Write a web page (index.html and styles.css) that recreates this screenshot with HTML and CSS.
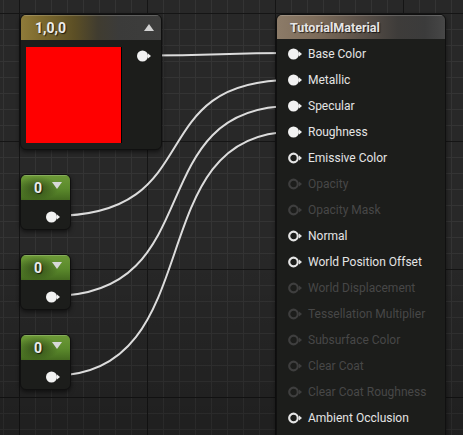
FILE: index.html
```html
<!DOCTYPE html>
<html>
<head>
<meta charset="utf-8">
<link rel="stylesheet" href="styles.css">
</head>
<body>
<div class="canvas">
  <svg class="wires" width="463" height="435" viewBox="0 0 463 435">
    <path d="M144 55.5 C220 55.5 220 53 292 53"/>
    <path d="M52 216 C212 216 138 80 292 80"/>
    <path d="M52 296 C212 296 138 106 292 106"/>
    <path d="M52 376 C212 376 138 132 292 132"/>
  </svg>

  <div class="node vec">
    <div class="head vec-head">
      <span class="title">1,0,0</span>
      <span class="tri-up"></span>
    </div>
    <div class="vec-body">
      <div class="swatch"></div>
      <svg class="pin" width="15" height="12" viewBox="0 0 15 12"><circle cx="5.5" cy="6" r="5.5"/><polygon points="11,3.5 14,6 11,8.5"/></svg>
    </div>
  </div>

  <div class="node scalar s1">
    <div class="head scalar-head"><span class="title">0</span><span class="tri-down"></span></div>
    <div class="scalar-body"><svg class="pin" width="15" height="12" viewBox="0 0 15 12"><circle cx="5.5" cy="6" r="5.5"/><polygon points="11,3.5 14,6 11,8.5"/></svg></div>
  </div>
  <div class="node scalar s2">
    <div class="head scalar-head"><span class="title">0</span><span class="tri-down"></span></div>
    <div class="scalar-body"><svg class="pin" width="15" height="12" viewBox="0 0 15 12"><circle cx="5.5" cy="6" r="5.5"/><polygon points="11,3.5 14,6 11,8.5"/></svg></div>
  </div>
  <div class="node scalar s3">
    <div class="head scalar-head"><span class="title">0</span><span class="tri-down"></span></div>
    <div class="scalar-body"><svg class="pin" width="15" height="12" viewBox="0 0 15 12"><circle cx="5.5" cy="6" r="5.5"/><polygon points="11,3.5 14,6 11,8.5"/></svg></div>
  </div>

  <div class="node mat">
    <div class="head mat-head"><span class="mat-title">TutorialMaterial</span></div>
    <ul class="inputs">
      <li class="on"><svg class="pin" width="15" height="12" viewBox="0 0 15 12"><circle cx="5.5" cy="6" r="5.5"/><polygon points="11,3.5 14,6 11,8.5"/></svg>Base Color</li>
      <li class="on"><svg class="pin" width="15" height="12" viewBox="0 0 15 12"><circle cx="5.5" cy="6" r="5.5"/><polygon points="11,3.5 14,6 11,8.5"/></svg>Metallic</li>
      <li class="on"><svg class="pin" width="15" height="12" viewBox="0 0 15 12"><circle cx="5.5" cy="6" r="5.5"/><polygon points="11,3.5 14,6 11,8.5"/></svg>Specular</li>
      <li class="on"><svg class="pin" width="15" height="12" viewBox="0 0 15 12"><circle cx="5.5" cy="6" r="5.5"/><polygon points="11,3.5 14,6 11,8.5"/></svg>Roughness</li>
      <li class="on"><svg class="pin ring" width="15" height="12" viewBox="0 0 15 12"><circle cx="5.5" cy="6" r="4.3"/><polygon points="11,3.5 14,6 11,8.5"/></svg>Emissive Color</li>
      <li class="off"><svg class="pin ring" width="15" height="12" viewBox="0 0 15 12"><circle cx="5.5" cy="6" r="4.3"/><polygon points="11,3.5 14,6 11,8.5"/></svg>Opacity</li>
      <li class="off"><svg class="pin ring" width="15" height="12" viewBox="0 0 15 12"><circle cx="5.5" cy="6" r="4.3"/><polygon points="11,3.5 14,6 11,8.5"/></svg>Opacity Mask</li>
      <li class="on"><svg class="pin ring" width="15" height="12" viewBox="0 0 15 12"><circle cx="5.5" cy="6" r="4.3"/><polygon points="11,3.5 14,6 11,8.5"/></svg>Normal</li>
      <li class="on"><svg class="pin ring" width="15" height="12" viewBox="0 0 15 12"><circle cx="5.5" cy="6" r="4.3"/><polygon points="11,3.5 14,6 11,8.5"/></svg>World Position Offset</li>
      <li class="off"><svg class="pin ring" width="15" height="12" viewBox="0 0 15 12"><circle cx="5.5" cy="6" r="4.3"/><polygon points="11,3.5 14,6 11,8.5"/></svg>World Displacement</li>
      <li class="off"><svg class="pin ring" width="15" height="12" viewBox="0 0 15 12"><circle cx="5.5" cy="6" r="4.3"/><polygon points="11,3.5 14,6 11,8.5"/></svg>Tessellation Multiplier</li>
      <li class="off"><svg class="pin ring" width="15" height="12" viewBox="0 0 15 12"><circle cx="5.5" cy="6" r="4.3"/><polygon points="11,3.5 14,6 11,8.5"/></svg>Subsurface Color</li>
      <li class="off"><svg class="pin ring" width="15" height="12" viewBox="0 0 15 12"><circle cx="5.5" cy="6" r="4.3"/><polygon points="11,3.5 14,6 11,8.5"/></svg>Clear Coat</li>
      <li class="off"><svg class="pin ring" width="15" height="12" viewBox="0 0 15 12"><circle cx="5.5" cy="6" r="4.3"/><polygon points="11,3.5 14,6 11,8.5"/></svg>Clear Coat Roughness</li>
      <li class="on"><svg class="pin ring" width="15" height="12" viewBox="0 0 15 12"><circle cx="5.5" cy="6" r="4.3"/><polygon points="11,3.5 14,6 11,8.5"/></svg>Ambient Occlusion</li>
    </ul>
  </div>
</div>
</body>
</html>
```
FILE: styles.css
```css
html, body {
  margin: 0;
  padding: 0;
  background: #262626;
}
.canvas {
  position: relative;
  width: 463px;
  height: 435px;
  overflow: hidden;
  font-family: Roboto, "Liberation Sans", sans-serif;
  background-color: #282828;
  background-image:
    linear-gradient(to bottom, rgba(0,0,0,0) 55%, rgba(0,0,0,0.22) 100%),
    linear-gradient(to bottom, #151515 1px, transparent 1px),
    linear-gradient(to right, #151515 1px, transparent 1px),
    linear-gradient(to bottom, #343434 1px, transparent 1px),
    linear-gradient(to right, #343434 1px, transparent 1px);
  background-size: 100% 100%, 128px 128px, 128px 128px, 16px 16px, 16px 16px;
  background-position: 0 0, 0 13px, 19px 0, 0 13px, 3px 0;
}
.wires {
  position: absolute;
  left: 0;
  top: 0;
}
.wires path {
  fill: none;
  stroke: #dcdcdc;
  stroke-width: 2;
}
.node {
  position: absolute;
  box-sizing: border-box;
  background: #1c1d1b;
  border-radius: 6px;
  border: 1px solid #101010;
  box-shadow: 0 2px 4px rgba(0,0,0,0.55);
  overflow: hidden;
}
.head {
  display: flex;
  align-items: center;
  box-sizing: border-box;
  box-shadow: inset 0 1px 0 rgba(255,255,255,0.18);
}
.title {
  color: #ececec;
  font-size: 14px;
  font-weight: 700;
  text-shadow: 1px 1px 1px rgba(0,0,0,0.7);
}
.pin circle, .pin polygon {
  fill: #f2f2f2;
}
.pin {
  display: block;
  flex: none;
}

/* vector node */
.vec {
  left: 20px;
  top: 14px;
  width: 142px;
  height: 136px;
}
.vec-head {
  height: 25px;
  padding-left: 14px;
  background: linear-gradient(to right, #8f7b3a 0%, #7d6a2e 14%, #5c4f25 38%, #403c30 55%, #3b3b3a 70%, #3d3d3c 100%);
}
.tri-up {
  width: 0;
  height: 0;
  margin-left: auto;
  margin-right: 7px;
  border-left: 5.5px solid transparent;
  border-right: 5.5px solid transparent;
  border-bottom: 7px solid #d2d2d2;
}
.vec-body {
  display: flex;
  align-items: flex-start;
  padding: 7px 0 0 5px;
}
.swatch {
  width: 95px;
  height: 96px;
  background: #ff0000;
  border-right: 1px solid #000;
}
.vec-body .pin {
  margin: 3px 0 0 15px;
}

/* scalar nodes */
.scalar {
  left: 20px;
  width: 51px;
  height: 56px;
}
.s1 { top: 174px; }
.s2 { top: 254px; }
.s3 { top: 334px; }
.scalar-head {
  height: 25px;
  padding-left: 13px;
  background:
    radial-gradient(ellipse 22px 12px at 16px 13px, rgba(20,30,10,0.55), rgba(20,30,10,0) 100%),
    linear-gradient(to bottom, #6d9a37 0%, #5b8a2c 55%, #44691f 100%);
}
.tri-down {
  width: 0;
  height: 0;
  margin-left: 10px;
  margin-top: -4px;
  border-left: 5.5px solid transparent;
  border-right: 5.5px solid transparent;
  border-top: 7px solid #d8d8d8;
}
.scalar-body {
  padding: 11px 0 0 25px;
}

/* material node */
.mat {
  left: 276px;
  top: 14px;
  width: 170px;
  height: 440px;
  border-bottom-left-radius: 0;
  border-bottom-right-radius: 0;
}
.mat-head {
  height: 24px;
  padding-left: 13px;
  background: linear-gradient(to right, #8c7b68 0%, #7e6d5b 22%, #5a5048 50%, #3e3c3a 72%, #3b3b3b 88%, #474747 100%);
}
.mat-title {
  color: #e6e6e6;
  font-size: 12.5px;
  font-weight: 700;
  text-shadow: 1px 1px 1px rgba(0,0,0,0.7);
}
.inputs {
  list-style: none;
  margin: 0;
  padding: 2px 0 0 11px;
}
.inputs li {
  display: flex;
  align-items: center;
  height: 26px;
  gap: 5px;
  font-size: 12px;
  color: #e4e4e4;
  white-space: nowrap;
}
.inputs li.off {
  color: #474747;
}
.ring circle {
  fill: none;
  stroke: #e4e4e4;
  stroke-width: 2.2;
}
.ring polygon {
  fill: #e4e4e4;
}
.off .ring circle {
  stroke: #3e3e3e;
}
.off .ring polygon {
  fill: #3e3e3e;
}
```
